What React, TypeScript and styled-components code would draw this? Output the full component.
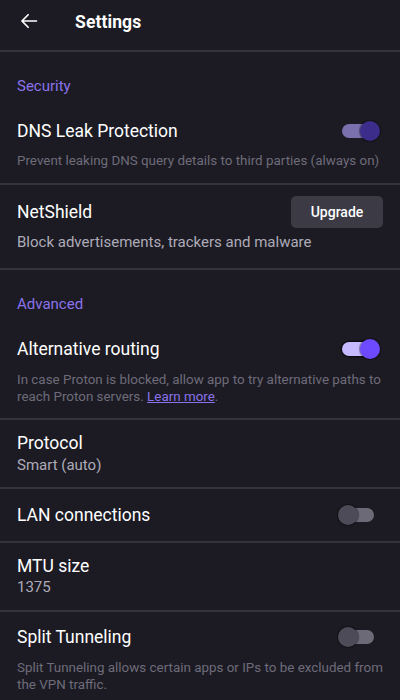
import React from "react";
import styled, { createGlobalStyle } from "styled-components";

const Global = createGlobalStyle`
  html, body { margin: 0; padding: 0; background: #1c1b23; }
  body { font-family: Roboto, "Noto Sans", sans-serif; -webkit-font-smoothing: antialiased; }
  * { box-sizing: border-box; }
`;

const Page = styled.div`
  width: 400px;
  height: 700px;
  overflow: hidden;
  background: #1c1b23;
  color: #fff;
`;

const Header = styled.div`
  height: 52px;
  display: flex;
  align-items: center;
  padding: 0 0 2px 18px;
  border-bottom: 2px solid #34333d;
`;

const BackButton = styled.div`
  width: 22px;
  height: 22px;
  display: flex;
  align-items: center;
  justify-content: center;
  margin-right: 35px;
  margin-top: -6px;
`;

const Title = styled.div`
  font-size: 17.5px;
  font-weight: 700;
  margin-top: -4px;
  letter-spacing: 0.1px;
`;

const SectionLabel = styled.div`
  padding: 24px 16px 0 17px;
  font-size: 15px;
  line-height: 20px;
  color: #8a72ea;
`;

const Item = styled.div<{ $pt: number; $pb: number; $border?: boolean }>`
  padding: ${(p) => p.$pt}px 16px ${(p) => p.$pb}px 17px;
  border-bottom: ${(p) => (p.$border === false ? "none" : "2px solid #34333d")};
`;

const TitleRow = styled.div<{ $h?: number }>`
  display: flex;
  align-items: center;
  justify-content: space-between;
  height: ${(p) => p.$h ?? 24}px;
`;

const ItemTitle = styled.div`
  font-size: 17.5px;
  line-height: 24px;
  color: #fff;
`;

const Sub = styled.div<{ $mt: number }>`
  margin-top: ${(p) => p.$mt}px;
  font-size: 15px;
  line-height: 20px;
  color: #aeabb9;
`;

const Desc = styled.div<{ $mt: number }>`
  margin-top: ${(p) => p.$mt}px;
  font-size: 13.4px;
  line-height: 17.5px;
  color: #6e6b7a;
`;

const Link = styled.span`
  color: #8a72ea;
  text-decoration: underline;
`;

const UpgradeButton = styled.div`
  width: 92px;
  height: 32px;
  border-radius: 5px;
  background: #3b3a45;
  display: flex;
  align-items: center;
  justify-content: center;
  font-size: 14px;
  font-weight: 500;
  color: #fff;
  margin-right: 1px;
`;

type ToggleKind = "disabledOn" | "on" | "off";

const Track = styled.div<{ $kind: ToggleKind }>`
  position: relative;
  width: 32px;
  height: 14px;
  border-radius: 7px;
  margin-right: 10px;
  background: ${(p) =>
    p.$kind === "on" ? "#c6b9ff" : p.$kind === "disabledOn" ? "#7a70ad" : "#6c6a77"};
  box-shadow: ${(p) => (p.$kind === "on" ? "0 0 0 1.5px #0d0c12" : "none")};
`;

const Thumb = styled.div<{ $kind: ToggleKind }>`
  position: absolute;
  top: -3px;
  left: ${(p) => (p.$kind === "off" ? "-4px" : "18px")};
  width: 20px;
  height: 20px;
  border-radius: 50%;
  background: ${(p) =>
    p.$kind === "on" ? "#6d4aff" : p.$kind === "disabledOn" ? "#3c2d8a" : "#4d4b58"};
  box-shadow: 0 0 1px 1px rgba(0, 0, 0, 0.35);
`;

const Toggle = ({ kind }: { kind: ToggleKind }) => (
  <Track $kind={kind}>
    <Thumb $kind={kind} />
  </Track>
);

export default function App() {
  return (
    <>
      <Global />
      <Page>
        <Header>
          <BackButton>
            <svg width="20" height="20" viewBox="0 0 24 24" fill="none">
              <path d="M21 12H3.5M11 4.5L3.5 12L11 19.5" stroke="#fff" strokeWidth="2" strokeLinecap="round" strokeLinejoin="round" />
            </svg>
          </BackButton>
          <Title>Settings</Title>
        </Header>

        <SectionLabel>Security</SectionLabel>
        <Item $pt={23} $pb={13}>
          <TitleRow>
            <ItemTitle>DNS Leak Protection</ItemTitle>
            <Toggle kind="disabledOn" />
          </TitleRow>
          <Desc $mt={9}>Prevent leaking DNS query details to third parties (always on)</Desc>
        </Item>
        <Item $pt={11} $pb={16}>
          <TitleRow $h={32}>
            <ItemTitle>NetShield</ItemTitle>
            <UpgradeButton>Upgrade</UpgradeButton>
          </TitleRow>
          <Sub $mt={4}>Block advertisements, trackers and malware</Sub>
        </Item>

        <SectionLabel>Advanced</SectionLabel>
        <Item $pt={23} $pb={12}>
          <TitleRow>
            <ItemTitle>Alternative routing</ItemTitle>
            <Toggle kind="on" />
          </TitleRow>
          <Desc $mt={10}>
            In case Proton is blocked, allow app to try alternative paths to reach Proton servers. <Link>Learn more</Link>.
          </Desc>
        </Item>
        <Item $pt={11} $pb={12}>
          <ItemTitle>Protocol</ItemTitle>
          <Sub $mt={0}>Smart (auto)</Sub>
        </Item>
        <Item $pt={14} $pb={14}>
          <TitleRow>
            <ItemTitle>LAN connections</ItemTitle>
            <Toggle kind="off" />
          </TitleRow>
        </Item>
        <Item $pt={11} $pb={13}>
          <ItemTitle>MTU size</ItemTitle>
          <Sub $mt={-1}>1375</Sub>
        </Item>
        <Item $pt={13} $pb={12} $border={false}>
          <TitleRow>
            <ItemTitle>Split Tunneling</ItemTitle>
            <Toggle kind="off" />
          </TitleRow>
          <Desc $mt={10}>
            Split Tunneling allows certain apps or IPs to be excluded from the VPN traffic.
          </Desc>
        </Item>
      </Page>
    </>
  );
}
